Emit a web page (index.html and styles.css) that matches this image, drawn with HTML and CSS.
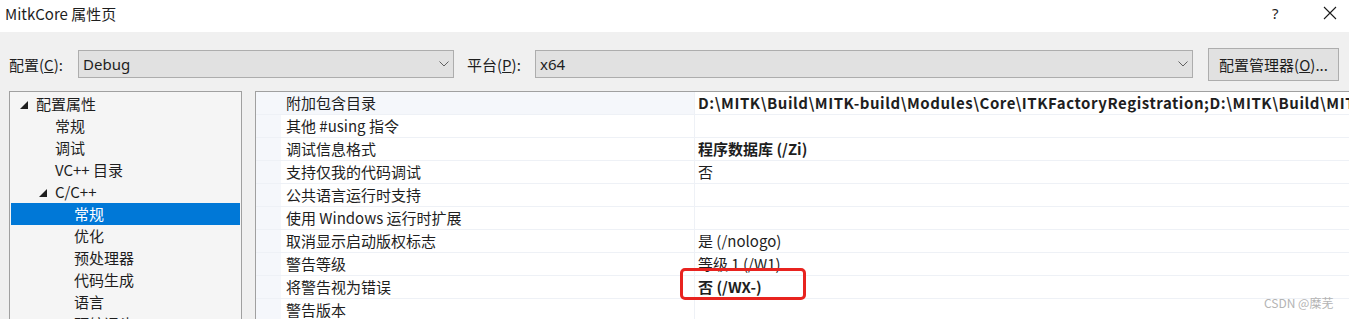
FILE: index.html
```html
<!DOCTYPE html>
<html lang="zh">
<head>
<meta charset="utf-8">
<title>MitkCore 属性页</title>
<link rel="stylesheet" href="styles.css">
</head>
<body>
<div class="window">
  <header class="titlebar">
    <span class="title">MitkCore 属性页</span>
    <span class="help">?</span>
    <span class="close"><svg width="14" height="14" viewBox="0 0 14 14"><path d="M1 1L13 13M13 1L1 13" stroke="#1a1a1a" stroke-width="1.1" fill="none"/></svg></span>
  </header>
  <div class="toolbar">
    <span class="label">配置(<u>C</u>):</span>
    <div class="combo combo-config"><span>Debug</span><svg class="chev" width="10" height="6" viewBox="0 0 10 6"><path d="M0.5 0.5L5 5L9.5 0.5" stroke="#606060" fill="none"/></svg></div>
    <span class="label label-plat">平台(<u>P</u>):</span>
    <div class="combo combo-plat"><span>x64</span><svg class="chev" width="10" height="6" viewBox="0 0 10 6"><path d="M0.5 0.5L5 5L9.5 0.5" stroke="#606060" fill="none"/></svg></div>
    <button class="btn">配置管理器(<u>O</u>)...</button>
  </div>
  <div class="main">
    <div class="tree">
      <div class="node l0"><svg class="tri" width="8" height="8" viewBox="0 0 8 8"><path d="M8 0L8 8L0 8Z" fill="#1e1e1e"/></svg>配置属性</div>
      <div class="node l1">常规</div>
      <div class="node l1">调试</div>
      <div class="node l1">VC++ 目录</div>
      <div class="node l1e"><svg class="tri" width="8" height="8" viewBox="0 0 8 8"><path d="M8 0L8 8L0 8Z" fill="#1e1e1e"/></svg>C/C++</div>
      <div class="node l2 selected">常规</div>
      <div class="node l2">优化</div>
      <div class="node l2">预处理器</div>
      <div class="node l2">代码生成</div>
      <div class="node l2">语言</div>
      <div class="node l2">预编译头</div>
    </div>
    <div class="grid">
      <div class="row first"><div class="margin"></div><div class="name">附加包含目录</div><div class="value bold path">D:\MITK\Build\MITK-build\Modules\Core\ITKFactoryRegistration;D:\MITK\Build\MITK-build\Modules\Core</div></div>
      <div class="row"><div class="margin"></div><div class="name">其他 #using 指令</div><div class="value"></div></div>
      <div class="row"><div class="margin"></div><div class="name">调试信息格式</div><div class="value bold">程序数据库 (/Zi)</div></div>
      <div class="row"><div class="margin"></div><div class="name">支持仅我的代码调试</div><div class="value">否</div></div>
      <div class="row"><div class="margin"></div><div class="name">公共语言运行时支持</div><div class="value"></div></div>
      <div class="row"><div class="margin"></div><div class="name">使用 Windows 运行时扩展</div><div class="value"></div></div>
      <div class="row"><div class="margin"></div><div class="name">取消显示启动版权标志</div><div class="value">是 (/nologo)</div></div>
      <div class="row"><div class="margin"></div><div class="name">警告等级</div><div class="value">等级 1 (/W1)</div></div>
      <div class="row"><div class="margin"></div><div class="name">将警告视为错误</div><div class="value bold">否 (/WX-)</div></div>
      <div class="row"><div class="margin"></div><div class="name">警告版本</div><div class="value"></div></div>
    </div>
  </div>
  <div class="redbox"></div>
  <div class="watermark">CSDN @糜芜</div>
</div>
</body>
</html>
```

FILE: styles.css
```css
html, body {
  margin: 0;
  padding: 0;
  width: 1349px;
  height: 319px;
  overflow: hidden;
  background: #f0f0f0;
  font-family: "Noto Sans CJK SC", "Noto Sans", sans-serif;
  color: #1e1e1e;
}
.window {
  position: relative;
  width: 1349px;
  height: 319px;
  overflow: hidden;
}
.titlebar {
  height: 32px;
  background: #ffffff;
  display: flex;
  align-items: center;
  font-size: 15px;
}
.title {
  padding-left: 5px;
  flex: 1;
  margin-top: -6px;
}
.help {
  width: 51px;
  margin-top: -6px;
  font-family: "Noto Sans", sans-serif;
  font-size: 15px;
}
.close {
  width: 26px;
  margin-top: -6px;
  display: flex;
}
.toolbar {
  height: 54px;
  padding-top: 5px;
  display: flex;
  align-items: center;
  font-size: 15px;
  padding-left: 9px;
}
.label {
  width: 69px;
  white-space: nowrap;
}
.label-plat {
  margin-left: 13px;
  width: 68px;
}
.combo {
  height: 26px;
  background: #e1e1e1;
  border: 1px solid #adadad;
  display: flex;
  align-items: center;
  justify-content: space-between;
  padding: 0 4px 0 4px;
  box-sizing: content-box;
  font-family: "Noto Sans", sans-serif;
  font-size: 15px;
}
.combo-config { width: 366px; }
.combo-plat { width: 648px; }
.btn {
  margin-left: 15px;
  width: 131px;
  height: 33px;
  background: #e1e1e1;
  border: 1px solid #adadad;
  font-family: "Noto Sans CJK SC", sans-serif;
  font-size: 15px;
  color: #1e1e1e;
  padding: 0;
}
.main {
  display: flex;
  padding-left: 9px;
}
.tree {
  width: 231px;
  height: 240px;
  background: #f5f5f5;
  border: 1px solid #a0a0a0;
  padding-top: 1px;
  font-size: 15px;
  flex: none;
}
.node {
  height: 22px;
  line-height: 22px;
  display: flex;
  align-items: center;
  white-space: nowrap;
  margin-left: 1px;
  margin-right: 1px;
}
.tri { margin-right: 8px; margin-top: 2px; }
.l0 { padding-left: 9px; }
.l1 { padding-left: 44px; }
.l1e { padding-left: 28px; }
.l2 { padding-left: 63px; }
.selected {
  background: #0078d7;
  color: #ffffff;
}
.grid {
  margin-left: 13px;
  flex: 1;
  height: 240px;
  border: 1px solid #a0a0a0;
  border-right: none;
  background: #ffffff;
  font-size: 15px;
}
.row {
  display: flex;
  height: 23px;
  box-sizing: border-box;
  border-bottom: 1px solid #eef1f6;
}
.margin {
  width: 25px;
  flex: none;
  background: #f5f7fb;
}
.name {
  width: 408px;
  flex: none;
  padding-left: 5px;
  line-height: 22px;
  border-right: 1px solid #eef1f6;
  white-space: nowrap;
}
.first .name { background: #f5f7fb; }
.value {
  flex: 1;
  padding-left: 3px;
  line-height: 22px;
  white-space: nowrap;
  overflow: hidden;
  font-size: 15px;
}
.bold { font-weight: bold; }
.path { letter-spacing: 0.55px; }
.redbox {
  position: absolute;
  left: 680px;
  top: 268px;
  width: 120px;
  height: 26px;
  border: 3px solid #e8231f;
  border-radius: 5px;
}
.watermark {
  position: absolute;
  left: 1264px;
  top: 294px;
  font-size: 12px;
  color: #b4b4b4;
  font-family: "Noto Sans CJK SC", sans-serif;
}
```
